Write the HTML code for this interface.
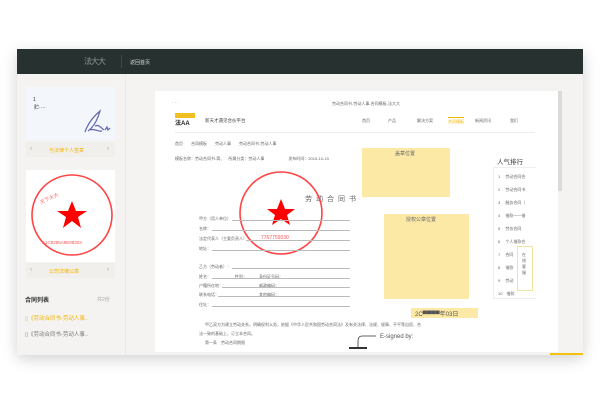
<!DOCTYPE html><html><head><meta charset="utf-8"><style>
body{margin:0;width:600px;height:400px;background:#fff;position:relative;overflow:hidden;font-family:"Liberation Sans","Noto Sans CJK SC",sans-serif;}
.a{position:absolute;}
.t{position:absolute;font-size:4px;color:#666;white-space:nowrap;}
.ln{position:absolute;height:0;border-top:1px solid #bbb;}
</style></head><body>
<div class="a" style="left:17px;top:49px;width:566px;height:306px;background:#f4f3f1;box-shadow:0 4px 14px rgba(0,0,0,.18)"></div>
<div class="a" style="left:17px;top:49px;width:566px;height:25px;background:#263130"></div>
<div class="a" style="left:84px;top:56px;font-size:8px;color:#8d9694;letter-spacing:-1px">法大大</div>
<div class="a" style="left:121px;top:55px;height:13px;border-left:1px solid #3d4847"></div>
<div class="a" style="left:130px;top:59px;font-size:5px;color:#ddd">返回首页</div>
<div class="a" style="left:125px;top:74px;width:1px;height:281px;background:#ebe9e6"></div>
<div class="a" style="left:26px;top:87px;width:89px;height:53px;background:#f3f6fb"></div>
<div class="t" style="left:33px;top:97px;font-size:5px;color:#333">1</div>
<div class="t" style="left:34px;top:104px;font-size:5px;color:#333">贮····</div>
<svg class="a" style="left:82px;top:108px" width="30" height="28"><path d="M3 24 C6 15 12 8 18 3 C16 10 13 18 6 23 M8 22 C12 20 16 24 20 23 M13 18 C17 16 19 20 22 22 M23 22 l2 -3 l1 3 l2 -2" stroke="#6065b0" stroke-width="1.2" fill="none"/></svg>
<div class="a" style="left:26px;top:142px;width:89px;height:15px;background:#f0efec"></div>
<div class="t" style="left:30px;top:146px;font-size:6px;color:#999">‹</div><div class="t" style="left:107px;top:146px;font-size:6px;color:#999">›</div>
<div class="t" style="left:49px;top:147px;font-size:5px;color:#f4b400">与法律个人签章</div>
<div class="a" style="left:26px;top:170px;width:89px;height:92px;background:#fff"></div>
<svg class="a" style="left:30px;top:172px" width="84" height="88"><circle cx="42" cy="43" r="40" stroke="#f44" stroke-width="1.6" fill="none"/><polygon points="42,29 46,39 57,39 48,45 51,56 42,49 33,56 36,45 27,39 38,39" fill="#f00"/><text x="12" y="72" font-size="4.5" fill="#f55" font-family="Liberation Sans">A1C8285A9E88303</text><text x="10" y="28" font-size="5" fill="#f66" transform="rotate(-25 20 28)">天下大大</text></svg>
<div class="a" style="left:26px;top:263px;width:89px;height:15px;background:#f0efec"></div>
<div class="t" style="left:30px;top:267px;font-size:6px;color:#999">‹</div><div class="t" style="left:107px;top:267px;font-size:6px;color:#999">›</div>
<div class="t" style="left:49px;top:268px;font-size:5px;color:#f4b400">公司法律公章</div>
<div class="t" style="left:25px;top:295px;font-size:6px;color:#333;font-weight:bold">合同列表</div>
<div class="t" style="left:97px;top:296px;font-size:5px;color:#aaa">共2份</div>
<div class="t" style="left:25px;top:314px;font-size:5.5px;color:#f4b400">▯《劳动合同书-劳动人事..</div>
<div class="t" style="left:25px;top:330px;font-size:5.5px;color:#777">▯《劳动合同书-劳动人事..</div>
<div class="a" style="left:155px;top:91px;width:403px;height:261px;background:#fff"></div>
<div class="a" style="left:558px;top:91px;width:4px;height:100px;background:#dcdad6"></div>
<div class="t" style="left:172px;top:100px">·  ·  ·</div>
<div class="a" style="left:175px;top:113px;width:20px;height:15px;background:#f0c020"><div style="margin-top:5px;height:10px;background:#fff;font-size:6px;color:#222;font-weight:bold">法AA</div></div>
<div class="t" style="left:205px;top:118px;font-size:4.5px;color:#444">新天才遇见合伙平台</div>
<div class="t" style="left:332px;top:101px">劳动合同书-劳动人事-合同模板-法大大</div>
<div class="t" style="left:362px;top:118px">首页</div><div class="t" style="left:388px;top:118px">产品</div><div class="t" style="left:417px;top:118px">解决方案</div>
<div class="t" style="left:448px;top:117px;color:#f4b400;border-top:1px solid #f4b400;padding-top:1px">合同模板</div>
<div class="t" style="left:475px;top:118px">新闻资讯</div><div class="t" style="left:510px;top:118px">我们</div>
<div class="ln" style="left:175px;top:132px;width:360px;border-color:#eee"></div>
<div class="t" style="left:175px;top:141px">首页　　合同模板　　劳动人事　　劳动合同书-劳动人事</div>
<div class="t" style="left:175px;top:156px">模板名称：劳动合同书-简、　所属分类：劳动人事　　　　　　发布时间：2015-10-15</div>
<div class="a" style="left:362px;top:148px;width:88px;height:49px;background:#fde9a6"></div>
<div class="t" style="left:395px;top:150px;font-size:5px;color:#666">盖章位置</div>
<div class="a" style="left:384px;top:214px;width:85px;height:85px;background:#fde9a6"></div>
<div class="t" style="left:406px;top:216px;font-size:5px;color:#666">授权公章位置</div>
<div class="a" style="left:411px;top:308px;width:67px;height:10px;background:#fde9a6"></div>
<div class="t" style="left:415px;top:309px;font-size:6px;color:#555">2C▀▀▀▀年03日</div>
<div class="t" style="left:305px;top:194px;font-size:7px;color:#666;letter-spacing:4px">劳动合同书</div>
<svg class="a" style="left:238px;top:170px" width="86" height="86"><circle cx="43" cy="43" r="41" stroke="#f44" stroke-width="1.6" fill="none"/><polygon points="43,29 47,39 57,39 49,45 52,55 43,49 34,55 37,45 29,39 39,39" fill="#f00"/><text x="23" y="69" font-size="5" fill="#f55" font-family="Liberation Sans">7767759030</text></svg>
<div class="t" style="left:199px;top:216px">甲方（用人单位）</div><div class="ln" style="left:232px;top:220px;width:118px"></div>
<div class="t" style="left:199px;top:226px">名称：</div><div class="ln" style="left:212px;top:230px;width:138px"></div>
<div class="t" style="left:199px;top:236px">法定代表人（主要负责人）</div><div class="ln" style="left:246px;top:240px;width:104px"></div>
<div class="t" style="left:199px;top:246px">地址：</div><div class="ln" style="left:212px;top:250px;width:138px"></div>
<div class="t" style="left:199px;top:264px">乙方（劳动者）：</div><div class="ln" style="left:232px;top:268px;width:118px"></div>
<div class="t" style="left:199px;top:274px">姓名：　　　　　　性别：　　　身份证号码：</div><div class="ln" style="left:212px;top:278px;width:138px"></div>
<div class="t" style="left:199px;top:283px">户籍所在地：　　　　　　　　　邮政编码：</div><div class="ln" style="left:222px;top:287px;width:128px"></div>
<div class="t" style="left:199px;top:292px">联系电话：　　　　　　　　　　其他编码：</div><div class="ln" style="left:218px;top:296px;width:132px"></div>
<div class="t" style="left:199px;top:302px">住址：</div><div class="ln" style="left:212px;top:306px;width:138px"></div>
<div class="t" style="left:205px;top:322px">甲乙双方为建立劳动关系，明确权利义务，依据《中华人民共和国劳动合同法》及有关法律、法规、规章、平平等自愿、合</div>
<div class="t" style="left:199px;top:331px">法一致的基础上，订立本合同。</div>
<div class="t" style="left:205px;top:340px">第一条　劳动合同期限</div>
<svg class="a" style="left:348px;top:333px" width="30" height="18"><path d="M28 3 H14 Q10 3 10 8 V14" stroke="#333" stroke-width="0.8" fill="none"/><rect x="1" y="14" width="18" height="2" fill="#333"/></svg>
<div class="t" style="left:380px;top:334px;font-size:6px;color:#555">E-signed by:</div>
<div class="t" style="left:497px;top:156px;font-size:6.5px;color:#333">人气排行</div>
<div class="a" style="left:493px;top:167px;width:42px;height:130px;border:1px solid #eee;border-right:none"></div>
<div class="t" style="left:498px;top:170px;line-height:13px;font-size:4px">1 　劳动合同合<br>2 　劳动合同书<br>3 　服务合同（<br>4 　借款一一借<br>5 　劳务合同<br>6 　个人借款合<br>7 　合同<br>8 　借款<br>9 　劳动<br>10　借款</div>
<div class="a" style="left:517px;top:246px;width:14px;height:43px;background:#fff;border:1px solid #f0e3a0"></div>
<div class="t" style="left:522px;top:252px;font-size:4px;line-height:6px;width:4px;white-space:normal">在线客服</div>
<div class="a" style="left:550px;top:353px;width:33px;height:2px;background:#f4c20d"></div>
</body></html>
